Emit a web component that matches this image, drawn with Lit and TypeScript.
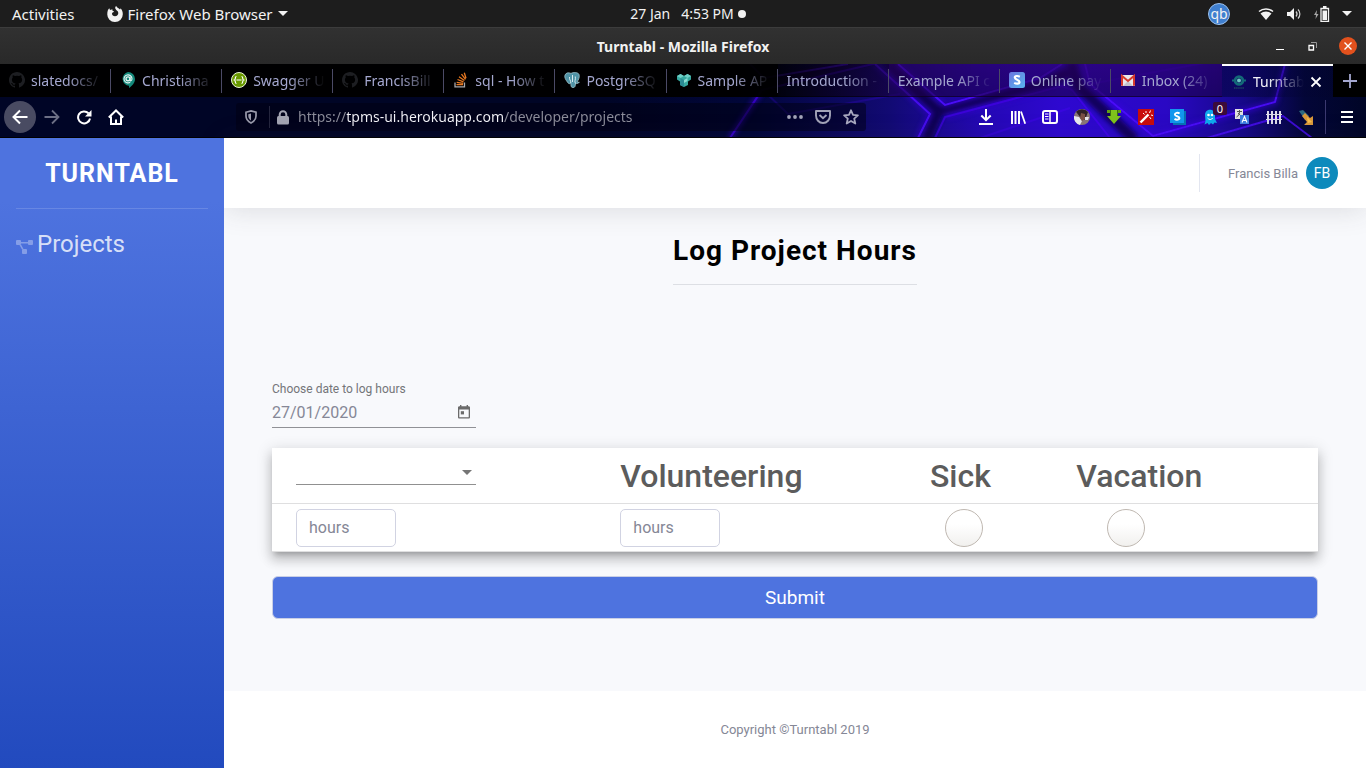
import { LitElement, html, css, svg, nothing } from "lit";
import { customElement, state } from "lit/decorators.js";
import { classMap } from "lit/directives/class-map.js";

const icons: Record<string, unknown> = {
  github: html`<svg width="16" height="16" viewBox="0 0 16 16" aria-hidden="true"><path fill="#1d1e22" d="M8 0C3.58 0 0 3.58 0 8c0 3.54 2.29 6.53 5.47 7.59.4.07.55-.17.55-.38v-1.5c-2.01.37-2.53-.49-2.69-.94-.09-.23-.48-.94-.82-1.13-.28-.15-.68-.52-.01-.53.63-.01 1.08.58 1.23.82.72 1.21 1.87.87 2.33.66.07-.52.28-.87.51-1.07-1.78-.2-3.64-.89-3.64-3.95 0-.87.31-1.59.82-2.15-.08-.2-.36-1.02.08-2.12 0 0 .67-.21 2.2.82a7.6 7.6 0 0 1 4 0c1.53-1.04 2.2-.82 2.2-.82.44 1.1.16 1.92.08 2.12.51.56.82 1.27.82 2.15 0 3.07-1.87 3.75-3.65 3.95.29.25.54.73.54 1.48v2.2c0 .21.15.46.55.38A8 8 0 0 0 8 0z"/></svg>`,
  chat: html`<svg width="16" height="16" viewBox="0 0 16 16" aria-hidden="true"><path fill="#14897b" d="M8 0a7 7 0 0 1 7 7c0 4-3 7-6 9v-2.200A7 7 0 0 1 8 0z"/><circle cx="8" cy="6.800" r="2" fill="none" stroke="#e6f5f2" stroke-width="1.300"/><path d="M10 5v3c0 1.500 2 1 2-1.200a4 4 0 1 0-1.800 3.400" fill="none" stroke="#e6f5f2" stroke-width="1.100"/></svg>`,
  swagger: html`<svg width="16" height="16" viewBox="0 0 16 16" aria-hidden="true"><circle cx="8" cy="8" r="7.500" fill="#6a9a00" stroke="#e9f4d4"/><path d="M5.500 4.500c-2 0-.5 3-2 3.500 1.500.5 0 3.500 2 3.500M10.500 4.500c2 0 .5 3 2 3.500-1.500.5 0 3.500-2 3.500M5.500 8h5" fill="none" stroke="#fff" stroke-width="1.200"/></svg>`,
  stack: html`<svg width="16" height="16" viewBox="0 0 16 16" aria-hidden="true"><path d="M2 10.500v4.300h9.500v-4.300" fill="none" stroke="#a9a9ae" stroke-width="1.300"/><path d="M3.500 12.700h6.500M3.700 10.300l6.500 1M4.500 7.500l6 2.400M6 4.800l5.400 3.700M8.500 2.200l4 5.200M11.300.8l1.700 5.500" stroke="#e87922" stroke-width="1.300"/></svg>`,
  postgres: html`<svg width="16" height="16" viewBox="0 0 16 16" aria-hidden="true"><path fill="#4f93a6" stroke="#9fc3cb" stroke-width=".8" d="M1 3c1-2.500 4-2.500 6-1.600C9 .3 14 0 15 2.500c1 3-1 6-2 7.500 1 .5 1.800.2 2.300 0-.8 1.700-2.500 1.700-3.800 1.500-.3 2.500-.2 4-2.500 4S7 13.500 6.800 11c-1.300 1.300-2.300.7-3.300-.8C2 8 0 5.500 1 3z"/><path d="M6.800 11c.2-3-1.800-3-1.300-6M11.500 11.500C10 9 12 8 11.300 4.500M8.500 3v7" fill="none" stroke="#d6eaee" stroke-width="1"/></svg>`,
  sample: html`<svg width="16" height="16" viewBox="0 0 16 16" aria-hidden="true"><path fill="#36a9a0" d="M1 4l3.500-2L8 4l3.500-2L15 4v3.500l-3 2v3.500L8 15l-4-2V9.500l-3-2z"/><path fill="#6fcfc6" d="M8 4l3.500-2L15 4l-3.500 2zM1 4l3.500-2L8 4 4.500 6z"/><path fill="#2b8a94" d="M4.500 6L8 8v7l-4-2V9.500l.5-.3z"/><path fill="#8bdcd3" d="M8 8l3.500-2v3L8 11z"/></svg>`,
  stripe: html`<svg width="16" height="16" viewBox="0 0 16 16" aria-hidden="true"><defs><linearGradient id="sg" x2="1" y2="1"><stop stop-color="#6a74e0"/><stop offset="1" stop-color="#58b6ef"/></linearGradient></defs><rect width="16" height="16" rx="2.500" fill="url(#sg)"/><path d="M10.800 4.700C9 3.700 5.800 3.600 5.800 5.600c0 2.500 4.700 1.800 4.700 4.400 0 2.100-3.200 2.100-5.300.9" fill="none" stroke="#fff" stroke-width="2.200"/></svg>`,
  gmail: html`<svg width="16" height="16" viewBox="0 0 16 16" aria-hidden="true"><path fill="#e9e7ec" d="M1 3h14v11H1z"/><path fill="#c4c2cd" d="M3 14l5-5 5 5z"/><path d="M2 13.800V4l6 5 6-5v9.800" fill="none" stroke="#d8392d" stroke-width="2"/></svg>`,
  turntabl: html`<svg width="16" height="16" viewBox="0 0 16 16" aria-hidden="true"><circle cx="8" cy="6.500" r="3.900" fill="none" stroke="#136a78" stroke-width="2.800"/><circle cx="8" cy="6.500" r="2" fill="#6fc4c4"/><path d="M1 6.500h3M12 6.500h3" stroke="#136a78" stroke-width="2"/><path d="M3 14h10" stroke="#1c4560" stroke-width="1.500" stroke-dasharray="1.500 .6"/></svg>`,
};

interface Tab { title: string; icon?: string; active?: boolean; tone?: "mid" | "late"; }
const TABS: Tab[] = [
  { title: "slatedocs/", icon: "github" },
  { title: "Christiana", icon: "chat" },
  { title: "Swagger U", icon: "swagger" },
  { title: "FrancisBill", icon: "github" },
  { title: "sql - How t", icon: "stack" },
  { title: "PostgreSQ", icon: "postgres" },
  { title: "Sample AP", icon: "sample" },
  { title: "Introduction -", tone: "mid" },
  { title: "Example API c", tone: "late" },
  { title: "Online pay", icon: "stripe", tone: "late" },
  { title: "Inbox (24)", icon: "gmail", tone: "late" },
  { title: "Turntab", icon: "turntabl", active: true },
];

const TOOLS: { label: string; badge?: string; art: unknown }[] = [
  { label: "Downloads", art: svg`<path d="M8 0v11M3.300 6.500L8 11.200l4.700-4.700M1 15h14" fill="none" stroke="#fff" stroke-width="2"/>` },
  { label: "Library", art: svg`<path d="M2 2v13M5.500 2v13M9 2v13" stroke="#fff" stroke-width="2"/><path d="M11 2.500l4.200 12.300" stroke="#fff" stroke-width="1.800"/>` },
  { label: "Sidebars", art: svg`<rect x="1" y="2" width="14" height="12" rx="2" fill="none" stroke="#fff" stroke-width="2"/><path d="M8 2v12" stroke="#fff" stroke-width="1.500"/><path d="M3 5h3.500M3 7.500h3.500M3 10h3.500" stroke="#fff"/>` },
  { label: "Account", art: svg`<circle cx="8" cy="8" r="8" fill="#8a7777"/><path fill="#2f2228" d="M2 2.700A8 8 0 0 1 14 3l-3 8-5-3z"/><path fill="#e9e8ee" d="M0 7l5 1 3 4-2 4A8 8 0 0 1 0 7zM11 8l4 0-1 3h-3z"/><path fill="#7b5146" d="M7 4l4 1v5l-3 2-2-3z"/>` },
  { label: "Download helper", art: svg`<path fill="#7fc41c" d="M5 1h6v6h4l-7 8-7-8h4z"/><path fill="#5f9f14" d="M1 1h3v3H1zM12 1h3v3h-3z"/><path d="M4.500 1v6M11.500 1v6" stroke="#3c6f10"/>` },
  { label: "Magic wand", art: svg`<path fill="#c90d0d" d="M0 0h16v16H0z"/><path d="M2.500 13.500l8-8" stroke="#fff" stroke-width="2.400"/><path d="M8 2v2M5 4l1.500 1.500M12.500 1.500L11.500 4M13 6l2 .5M11.500 8l1.500 2" stroke="#fff"/>` },
  { label: "Skype", art: svg`<path fill="#0672b5" d="M3 2h13v14H3z"/><path fill="#1297ee" d="M0 0h14v14H0z"/><path d="M9.600 4.500C7.800 3.300 4.900 3.700 4.900 5.500c0 2.200 4.500 1.400 4.500 3.600 0 2-3.200 1.800-4.900.8" fill="none" stroke="#fff" stroke-width="2"/>` },
  { label: "Ghostery", badge: "0", art: svg`<path fill="#0fa9ee" d="M3 6c0-7 10-7 10 0v4l2 4-2.500-.5-1.500 2-2-1.500-2 2-1.500-2-3 1.500 1-3.500z"/><circle cx="6.500" cy="6" r="1.300" fill="#fff"/><circle cx="10" cy="6" r="1.300" fill="#fff"/><path d="M5.500 9c1.500 2 4 2 5.200 0" fill="none" stroke="#fff"/>` },
  { label: "Translate", art: svg`<path fill="#e2e2e2" d="M1 0h8v10H1z"/><path d="M3 2.500h5M5.500 1v2c0 2-1 4-3 5M4 4l4 4" fill="none" stroke="#555"/><path fill="#3d7de0" d="M6 6h9v9H6z"/><path d="M8 13.500l2.500-6 2.500 6M9 11.500h3" fill="none" stroke="#fff" stroke-width="1.100"/>` },
  { label: "Containers", art: svg`<path d="M2 2v13M6 2v13M10 2v13M14 2v13" stroke="#dedce9" stroke-width="2"/><path d="M0 5.500h16M0 10.500h16" stroke="#dedce9" stroke-width="1.200"/>` },
  { label: "Pointer", art: svg`<path fill="#2c6a80" d="M1 2l4-1 6 6-4 4z"/><path fill="#d9983a" d="M4 7l3-3 5 5 3-2v9H6l3-3z"/><path fill="#f9c04c" d="M9 8l5 5-4 1z"/>` },
];

@customElement("browser-chrome")
export class BrowserChrome extends LitElement {
  static styles = css`
    :host { display: block; flex: none; font-family: "Noto Sans", "Open Sans", sans-serif; font-size: 14px; color: #f2f2f2; }
    button { appearance: none; border: 0; padding: 0; margin: 0; background: none; color: inherit; font: inherit; display: flex; align-items: center; }
    svg { display: block; flex: none; }
    .panel { height: 27px; background: #1d1d1d; display: grid; grid-template-columns: 1fr auto 1fr; align-items: center; padding: 0 14px 0 12px; }
    .left { display: flex; align-items: center; gap: 32px; font-size: 15px; }
    .app { gap: 5px; }
    .clock { gap: 4px; padding-left: 12px; white-space: pre; }
    .dot { width: 8px; height: 8px; border-radius: 50%; background: #f2f2f2; }
    .status { display: flex; align-items: center; justify-content: flex-end; gap: 12px; }
    .qb { width: 22px; height: 22px; margin-right: 16px; border-radius: 50%; box-sizing: border-box; border: 1px solid #9cc2ee; background: #3f7fcf; justify-content: center; line-height: 16px; font-size: 14px; }
    .title { height: 37px; box-sizing: border-box; border-top: 1px solid #3c3c3c; background: linear-gradient(#313131, #292929); display: grid; grid-template-columns: 1fr auto 1fr; align-items: center; padding: 0 9px; }
    .title h1 { margin: 0; grid-column: 2; font-size: 14px; font-weight: 700; }
    .controls { display: flex; justify-content: flex-end; align-items: center; gap: 22px; }
    .close { width: 18px; height: 18px; border-radius: 50%; background: #e2511d; justify-content: center; }
    .skin { position: relative; background: #000526; height: 74px; overflow: hidden; }
    .art { position: absolute; right: 0; top: 0; }
    .bars { position: relative; }
    .tabs { display: grid; grid-template-columns: repeat(12, minmax(0, 1fr)) 33px; height: 33px; }
    .tab { position: relative; min-width: 0; box-sizing: border-box; padding: 0 8px 0 9px; gap: 6px; background: var(--shade, rgba(0, 0, 0, .97)); color: #a5a8d0; border-bottom: 1px solid rgba(0, 0, 0, .5); }
    .tab + .tab::before { content: ""; position: absolute; left: -1px; top: 5px; height: 24px; width: 1px; background: #4b4a66; }
    .tab.late { --shade: linear-gradient(rgba(40, 0, 84, .6), rgba(26, 0, 66, .6)); }
    .tab.mid { --shade: linear-gradient(90deg, rgba(0, 0, 0, .8), rgba(20, 0, 50, .6)); }
    .tab.active { --shade: linear-gradient(90deg, rgba(3, 4, 60, .6), rgba(3, 4, 40, .2)); border-top: 2px solid #fff; border-bottom: 0; color: #f4f4fa; padding-right: 11px; }
    .tab.active::before { display: none; }
    .name { flex: 1; min-width: 0; overflow: hidden; white-space: nowrap; text-align: left; mask-image: linear-gradient(to left, transparent, #000 36px); }
    .plus { background: #000; justify-content: center; }
    .nav { display: flex; align-items: center; height: 41px; padding: 0 3px 0 4px; box-sizing: border-box; border-bottom: 1px solid #000; }
    .tool { position: relative; flex: none; width: 32px; height: 32px; justify-content: center; border-radius: 50%; }
    .back { background: #494b62; }
    .space { flex: 1; }
    .url { flex: 6; min-width: 0; display: flex; align-items: center; height: 28px; border-radius: 3px; background: rgba(0, 0, 16, .5); padding: 0 3px; gap: 4px; box-sizing: border-box; }
    .url button { width: 24px; height: 24px; flex: none; justify-content: center; }
    .site { gap: 6px; display: flex; align-items: center; margin-right: 4px; }
    .url .lock { width: 14px; }
    .rule { width: 1px; height: 22px; background: #25263e; flex: none; }
    .rule.tall { height: 34px; margin: 0 5px 0 3px; background: #3b3970; }
    .address { flex: 1; min-width: 0; border: 0; padding: 0; outline: 0; font: inherit; line-height: 24px; color: transparent; background: linear-gradient(90deg, #8d8e9b 48px, #f5f5fa 48px 206px, #8d8e9b 206px); background-clip: text; -webkit-background-clip: text; }
    .badge { position: absolute; right: -1px; top: 1px; width: 14px; height: 13px; font-size: 11px; line-height: 13px; border-radius: 2px; background: #3b0b3a; color: #fff; }
  `;

  render() {
    return html`
      <div class="panel">
        <div class="left">
          <button>Activities</button>
          <button class="app">
            <svg width="16" height="16" viewBox="0 0 16 16" aria-hidden="true"><path fill="#f2f2f2" d="M8 16a7.600 7.600 0 0 1-7.700-8C.3 5.500 1 3.500 2.300 2.300L3 4l2.500-.8C5 4.500 5.500 5 7 5.300c-.3 1.200-2 1.200-2 2.200 0 1.700 1.300 2.800 3 2.800 2 0 3.300-1.600 3.300-3.300C11.300 4.700 9 4.500 8.300 2.500 8 1.300 8.500.4 9.300 0c.2 1.700 2.300 2 3.700 3.600.4-.3.500-.9.400-1.400 1.500 1.300 2.400 3.400 2.400 5.800A7.800 7.800 0 0 1 8 16z"/></svg>
            <span>Firefox Web Browser</span>
            <svg width="10" height="5" viewBox="0 0 10 5" aria-hidden="true"><path fill="#f2f2f2" d="M0 0h10L5 5z"/></svg>
          </button>
        </div>
        <button class="clock"><span>27 Jan   4:53 PM</span><span class="dot"></span></button>
        <div class="status">
          <button class="qb">qb</button>
          <svg width="16" height="14" viewBox="0 0 16 14" aria-hidden="true"><path d="M1 4.500c4-3.500 10-3.500 14 0" fill="none" stroke="#f2f2f2" stroke-width="1.500"/><path fill="#f2f2f2" d="M2.500 6.500c3-2.700 8-2.700 11 0L8 13z"/></svg>
          <svg width="16" height="14" viewBox="0 0 16 14" aria-hidden="true"><path fill="#f2f2f2" d="M1 5h3l4-4v12L4 9H1z"/><path d="M10 4.500c1.300 1.500 1.300 3.500 0 5M12 2.500c2.500 2.500 2.500 6.500 0 9" fill="none" stroke="#d0d0d0" stroke-width="1.200"/></svg>
          <svg width="16" height="16" viewBox="0 0 16 16" aria-hidden="true"><path fill="#a8a8a8" d="M3 4L0 9h2l-.5 4L4.500 8h-2z"/><path d="M7 2.500h7.500v13H7z" fill="none" stroke="#f2f2f2" stroke-width="1.300"/><path fill="#f2f2f2" d="M9 0h3.500v2H9zM8.500 4.500H13V14H8.500z"/></svg>
          <svg width="10" height="5" viewBox="0 0 10 5" aria-hidden="true"><path fill="#f2f2f2" d="M0 0h10L5 5z"/></svg>
        </div>
      </div>
      <div class="title">
        <h1>Turntabl - Mozilla Firefox</h1>
        <div class="controls">
          <button aria-label="Minimise"><svg width="12" height="10" viewBox="0 0 12 10"><path d="M2 8.500h8" stroke="#fff"/></svg></button>
          <button aria-label="Restore"><svg width="9" height="9" viewBox="0 0 9 9"><path d="M1 3.500h4.500V8H1z" fill="none" stroke="#fff" stroke-width="1.300"/><path d="M3 .5h5.500V6" fill="none" stroke="#999"/></svg></button>
          <button class="close" aria-label="Close"><svg width="8" height="8" viewBox="0 0 8 8"><path d="M.5.5l7 7M7.500.5l-7 7" stroke="#fff" stroke-width="1.400"/></svg></button>
        </div>
      </div>
      <div class="skin">
        <svg class="art" width="766" height="74" viewBox="-100 0 766 74" aria-hidden="true">
          <defs>
            <linearGradient id="base" x1="0" x2="1">
              <stop offset="0" stop-color="#000526"/><stop offset=".2" stop-color="#01063a"/><stop offset=".38" stop-color="#120a74"/>
              <stop offset=".5" stop-color="#2408b4"/><stop offset=".6" stop-color="#2e08d0"/><stop offset=".74" stop-color="#2a08c4"/><stop offset=".84" stop-color="#160888"/>
              <stop offset=".92" stop-color="#030638"/><stop offset="1" stop-color="#000526"/>
            </linearGradient>
            <filter id="soft" x="-10%" y="-50%" width="120%" height="200%"><feGaussianBlur stdDeviation="2.500"/></filter>
            <filter id="glow" x="-10%" y="-50%" width="120%" height="200%"><feGaussianBlur stdDeviation=".6"/></filter>
          </defs>
          <rect x="-100" width="766" height="74" fill="url(#base)"/>
          <g fill="none" stroke="#08034a" stroke-width="11" opacity=".85" filter="url(#soft)">
            <path d="M187 -2L238 47L345 20L368 8"/><path d="M371 -2L378 22L435 76"/><path d="M52 -2L62 20L170 -6"/><path d="M238 47L226 76"/>
          </g>
          <g fill="none" stroke="#3c06e6" stroke-width="5" opacity=".5" filter="url(#soft)">
            <path d="M175 0L230 50L218 74M198 0L245 41L340 14M385 0L388 20L455 72L575 38L585 0M62 26L30 74M245 53L350 24"/>
          </g>
          <g fill="none" stroke="#4d0bff" stroke-width="2" filter="url(#glow)">
            <path d="M50 0L64 14L148 0" opacity=".8"/><path d="M30 74L62 26L190 -4" opacity=".55"/><path d="M64 27L88 50L200 30" opacity=".2"/>
            <path d="M175 0L230 50L218 74" opacity=".8"/><path d="M198 0L245 41L340 14L362 0" opacity=".9"/><path d="M235 74L245 53L362 22L372 26L410 74" opacity=".5"/>
            <path d="M385 0L390 20L453 72L575 38L585 0" opacity=".85"/><path d="M500 76L583 52L612 74" opacity=".75"/>
            <path d="M390 20L520 -4M280 74L370 44" opacity=".3"/>
          </g>
        </svg>
        <div class="bars">
          <div class="tabs" role="tablist">
            ${TABS.map(t => html`
              <button role="tab" aria-selected=${t.active ? "true" : "false"} class=${classMap({ tab: true, active: !!t.active, late: t.tone === "late", mid: t.tone === "mid" })}>
                ${t.icon ? icons[t.icon] : nothing}
                <span class="name">${t.title}</span>
                ${t.active ? html`<svg width="12" height="12" viewBox="0 0 12 12"><path d="M1.500 1.500l9 9M10.500 1.500l-9 9" stroke="#fff" stroke-width="1.800"/></svg>` : nothing}
              </button>`)}
            <button class="plus" aria-label="New tab"><svg width="14" height="14" viewBox="0 0 14 14"><path d="M7 0v14M0 7h14" stroke="#a5a8d0" stroke-width="1.800"/></svg></button>
          </div>
          <div class="nav">
            <button class="tool back" aria-label="Back"><svg width="16" height="16" viewBox="0 0 16 16"><path d="M15.500 8H1.500M8 1.500L1.500 8 8 14.500" fill="none" stroke="#fff" stroke-width="2"/></svg></button>
            <button class="tool" aria-label="Forward"><svg width="16" height="16" viewBox="0 0 16 16"><path d="M.5 8h14M8 1.500L14.500 8 8 14.500" fill="none" stroke="#6c6f85" stroke-width="1.800"/></svg></button>
            <button class="tool" aria-label="Reload"><svg width="16" height="16" viewBox="0 0 16 16"><path d="M12.500 4.300A6 6 0 1 0 14 9.500" fill="none" stroke="#fff" stroke-width="2"/><path fill="#fff" d="M15.500 1v6.500H9z"/></svg></button>
            <button class="tool" aria-label="Home"><svg width="16" height="16" viewBox="0 0 16 16"><path d="M.8 8.500L8 1.500l7.200 7M3 7.500V15h10V7.500M8 10.500V15" fill="none" stroke="#fff" stroke-width="2"/></svg></button>
            <span class="space"></span>
            <div class="url">
              <div class="site">
                <button aria-label="Tracking protection"><svg width="14" height="14" viewBox="0 0 14 14" aria-hidden="true"><path d="M2 2.200L7 .9l5 1.300V6c0 3.500-2 5.500-5 7-3-1.500-5-3.500-5-7z" fill="none" stroke="#9a9bac" stroke-width="1.700"/><path d="M7 3.500v7C5 9 4.300 7.800 4.300 6V4.200z" fill="#9a9bac"/></svg></button>
                <span class="rule"></span>
                <button class="lock" aria-label="Site information"><svg width="14" height="15" viewBox="0 0 14 15" aria-hidden="true"><rect x="1" y="6" width="12" height="8.500" rx="1.500" fill="#a3a4b2"/><path d="M3.700 7V4.500a3.300 3.300 0 0 1 6.600 0V7" fill="none" stroke="#a3a4b2" stroke-width="2"/></svg></button>
              </div>
              <input class="address" type="text" aria-label="Address" value="https://tpms-ui.herokuapp.com/developer/projects" />
              <button aria-label="Page actions"><svg width="16" height="4" viewBox="0 0 16 4"><g fill="#a3a4b8"><circle cx="2" cy="2" r="1.900"/><circle cx="8" cy="2" r="1.900"/><circle cx="14" cy="2" r="1.900"/></g></svg></button>
              <button aria-label="Save to Pocket"><svg width="16" height="14" viewBox="0 0 16 14"><path d="M1 1h14v4.500c0 4-3 7.500-7 7.500S1 9.500 1 5.500z" fill="none" stroke="#a3a4b8" stroke-width="1.900" stroke-linejoin="round"/><path d="M4.500 5L8 8.300 11.500 5" fill="none" stroke="#a3a4b8" stroke-width="1.900"/></svg></button>
              <button aria-label="Bookmark"><svg width="16" height="16" viewBox="0 0 16 16"><path d="M8 1.300l2 4.500 4.900.5-3.700 3.300 1.100 4.900L8 12l-4.300 2.500 1.100-4.900L1.100 6.300 6 5.800z" fill="none" stroke="#a9a9c0" stroke-width="1.800" stroke-linejoin="round"/></svg></button>
            </div>
            <span class="space"></span>
            ${TOOLS.map(t => html`<button class="tool" aria-label=${t.label}><svg width="16" height="16" viewBox="0 0 16 16">${t.art}</svg>${t.badge ? html`<span class="badge">${t.badge}</span>` : nothing}</button>`)}
            <span class="rule tall"></span>
            <button class="tool" aria-label="Menu"><svg width="12" height="12" viewBox="0 0 12 12"><path d="M0 1h12M0 6h12M0 11h12" stroke="#fff" stroke-width="2"/></svg></button>
          </div>
        </div>
      </div>`;
  }
}

@customElement("hours-form")
export class HoursForm extends LitElement {
  @state() private date = "27/01/2020";

  static styles = css`
    :host { display: block; }
    .form { display: flex; flex-direction: column; align-items: stretch; }
    .date { width: 204px; }
    .date label { display: block; font-size: 12px; line-height: 16px; color: #747579; }
    .field { display: flex; align-items: center; height: 30px; border-bottom: 1px solid #909196; }
    .field input { flex: 1; min-width: 0; border: 0; padding: 0; background: none; outline: 0; font: inherit; font-size: 16px; color: #858796; }
    .pick { appearance: none; border: 0; padding: 0 6px; background: none; display: flex; }
    .card { margin: 20px 0 24px; background: #fff; box-shadow: 0 5px 5px -3px rgba(0, 0, 0, .2), 0 8px 10px 1px rgba(0, 0, 0, .14), 0 3px 14px 2px rgba(0, 0, 0, .12); }
    table { width: 100%; border-collapse: separate; border-spacing: 0; table-layout: fixed; }
    th, td { padding: 0; text-align: left; border-bottom: 1px solid #dfdfe0; box-sizing: border-box; }
    th:first-child, td:first-child { padding-left: 24px; }
    th { height: 56px; font-size: 32px; font-weight: 500; line-height: 38px; color: #5c5c5c; }
    td { height: 48px; }
    .task { width: 33.3%; } .vol { width: 29.6%; } .sick { width: 14%; }
    .select { display: flex; align-items: center; width: 180px; height: 24px; border-bottom: 1px solid #909090; margin-bottom: 6px; }
    select { appearance: none; flex: 1; align-self: stretch; border: 0; outline: 0; background: none; font: inherit; font-size: 16px; }
    .arrow { margin-left: -14px; margin-right: 4px; pointer-events: none; }
    .hours { display: block; width: 100px; height: 38px; box-sizing: border-box; border: 1px solid #d1d3e2; border-radius: 5px; padding: 0 12px; font: inherit; font-size: 16px; color: #6e707e; }
    .hours::placeholder { color: #858796; opacity: 1; }
    .check { appearance: none; display: block; width: 38px; height: 38px; margin: 0 0 0 15px; border: 1px solid #bfb8b1; border-radius: 50%; background: linear-gradient(#fff 40%, #f1f0ee); }
    .check.wide { margin-left: 31px; }
    .check:checked { background: #4e73df; }
    .submit { height: 43px; border: 1px solid #c9cfe6; border-radius: 6px; background: #4e73df; color: #fff; font: inherit; font-size: 19px; }
  `;

  render() {
    return html`
      <form class="form" @submit=${(e: Event) => e.preventDefault()}>
        <div class="date">
          <label for="date">Choose date to log hours</label>
          <div class="field">
            <input id="date" type="text" .value=${this.date} @input=${(e: Event) => (this.date = (e.target as HTMLInputElement).value)} />
            <button type="button" class="pick" aria-label="Open calendar">
              <svg width="12" height="14" viewBox="0 0 12 14"><path fill="#6b6b6b" fill-rule="evenodd" d="M2 0h1.400v1.300h5.200V0H10v1.300h.7c.7 0 1.300.6 1.300 1.300v9.600c0 .7-.6 1.300-1.300 1.300H1.300c-.7 0-1.300-.6-1.300-1.300V2.600c0-.7.6-1.300 1.300-1.300H2zM1.300 4.600v7.600h9.400V4.600z"/><path fill="#6b6b6b" d="M2.800 6.200h3.200v3.200H2.800z"/></svg>
            </button>
          </div>
        </div>
        <div class="card">
          <table>
            <thead>
              <tr>
                <th class="task">
                  <div class="select">
                    <select aria-label="Project"><option></option></select>
                    <svg class="arrow" width="10" height="5" viewBox="0 0 10 5" aria-hidden="true"><path fill="#757575" d="M0 0h10L5 5z"/></svg>
                  </div>
                </th>
                <th class="vol" id="vol">Volunteering</th>
                <th class="sick" id="sick">Sick</th>
                <th id="vac">Vacation</th>
              </tr>
            </thead>
            <tbody>
              <tr>
                <td><input class="hours" type="text" placeholder="hours" aria-label="Project hours" /></td>
                <td><input class="hours" type="text" placeholder="hours" aria-labelledby="vol" /></td>
                <td><input class="check" type="checkbox" aria-labelledby="sick" /></td>
                <td><input class="check wide" type="checkbox" aria-labelledby="vac" /></td>
              </tr>
            </tbody>
          </table>
        </div>
        <button class="submit" type="submit">Submit</button>
      </form>`;
  }
}

@customElement("app-root")
export class AppRoot extends LitElement {
  static styles = css`
    :host { display: flex; flex-direction: column; min-height: 100vh; font-family: Roboto, "Liberation Sans", sans-serif; color: #858796; }
    .page { flex: 1; display: flex; }
    .sidebar { position: relative; z-index: 1; width: 224px; flex: none; box-sizing: border-box; padding: 0 16px; background: linear-gradient(180deg, #4e73df 10%, #224abe 100%); }
    .brand { display: flex; align-items: center; justify-content: center; height: 70px; border-bottom: 1px solid rgba(255, 255, 255, .15); color: #fff; font-size: 25px; font-weight: 700; letter-spacing: 1px; text-decoration: none; }
    .link { display: flex; align-items: center; gap: 4px; margin-top: 20px; font-size: 24px; line-height: 30px; color: rgba(255, 255, 255, .8); text-decoration: none; }
    .link svg { margin-top: 6px; }
    .content { flex: 1; min-width: 0; display: flex; flex-direction: column; background: #f8f9fc; }
    .topbar { position: relative; height: 70px; background: #fff; box-shadow: 0 2px 28px rgba(58, 59, 69, .15); display: flex; align-items: center; justify-content: flex-end; padding-right: 28px; }
    .divider { width: 1px; height: 38px; background: #e3e6f0; margin-right: 28px; }
    .user { display: flex; align-items: center; gap: 8px; font-size: 13px; color: #858796; text-decoration: none; }
    .avatar { width: 32px; height: 32px; border-radius: 50%; background: #0d8abc; color: #fff; font-size: 14px; display: flex; align-items: center; justify-content: center; }
    main { flex: 1; display: flex; flex-direction: column; padding: 24px 48px; }
    h2 { align-self: center; margin: 0 0 96px; padding-bottom: 14px; border-bottom: 1px solid #dddfe4; color: #000; font-size: 28px; line-height: 38px; font-weight: 700; letter-spacing: 1px; }
    footer { height: 77px; background: #fff; display: flex; align-items: center; justify-content: center; font-size: 13px; }
  `;

  render() {
    return html`
      <browser-chrome></browser-chrome>
      <div class="page">
        <nav class="sidebar">
          <a class="brand" href="#">TURNTABL</a>
          <a class="link" href="#projects">
            <svg width="17" height="15" viewBox="0 0 17 15" aria-hidden="true"><g fill="#fff" opacity=".32"><rect width="5" height="5" rx="1"/><rect x="12" width="5" height="5" rx="1"/><rect x="6" y="9" width="5" height="5" rx="1"/><path d="M5 2h7v1.500H5zM3.500 5L5 4.500 7.500 9 6 9.500z"/></g></svg>
            <span>Projects</span>
          </a>
        </nav>
        <div class="content">
          <header class="topbar">
            <span class="divider"></span>
            <a class="user" href="#profile"><span>Francis Billa</span><span class="avatar">FB</span></a>
          </header>
          <main>
            <h2>Log Project Hours</h2>
            <hours-form></hours-form>
          </main>
          <footer><span>Copyright ©Turntabl 2019</span></footer>
        </div>
      </div>`;
  }
}
